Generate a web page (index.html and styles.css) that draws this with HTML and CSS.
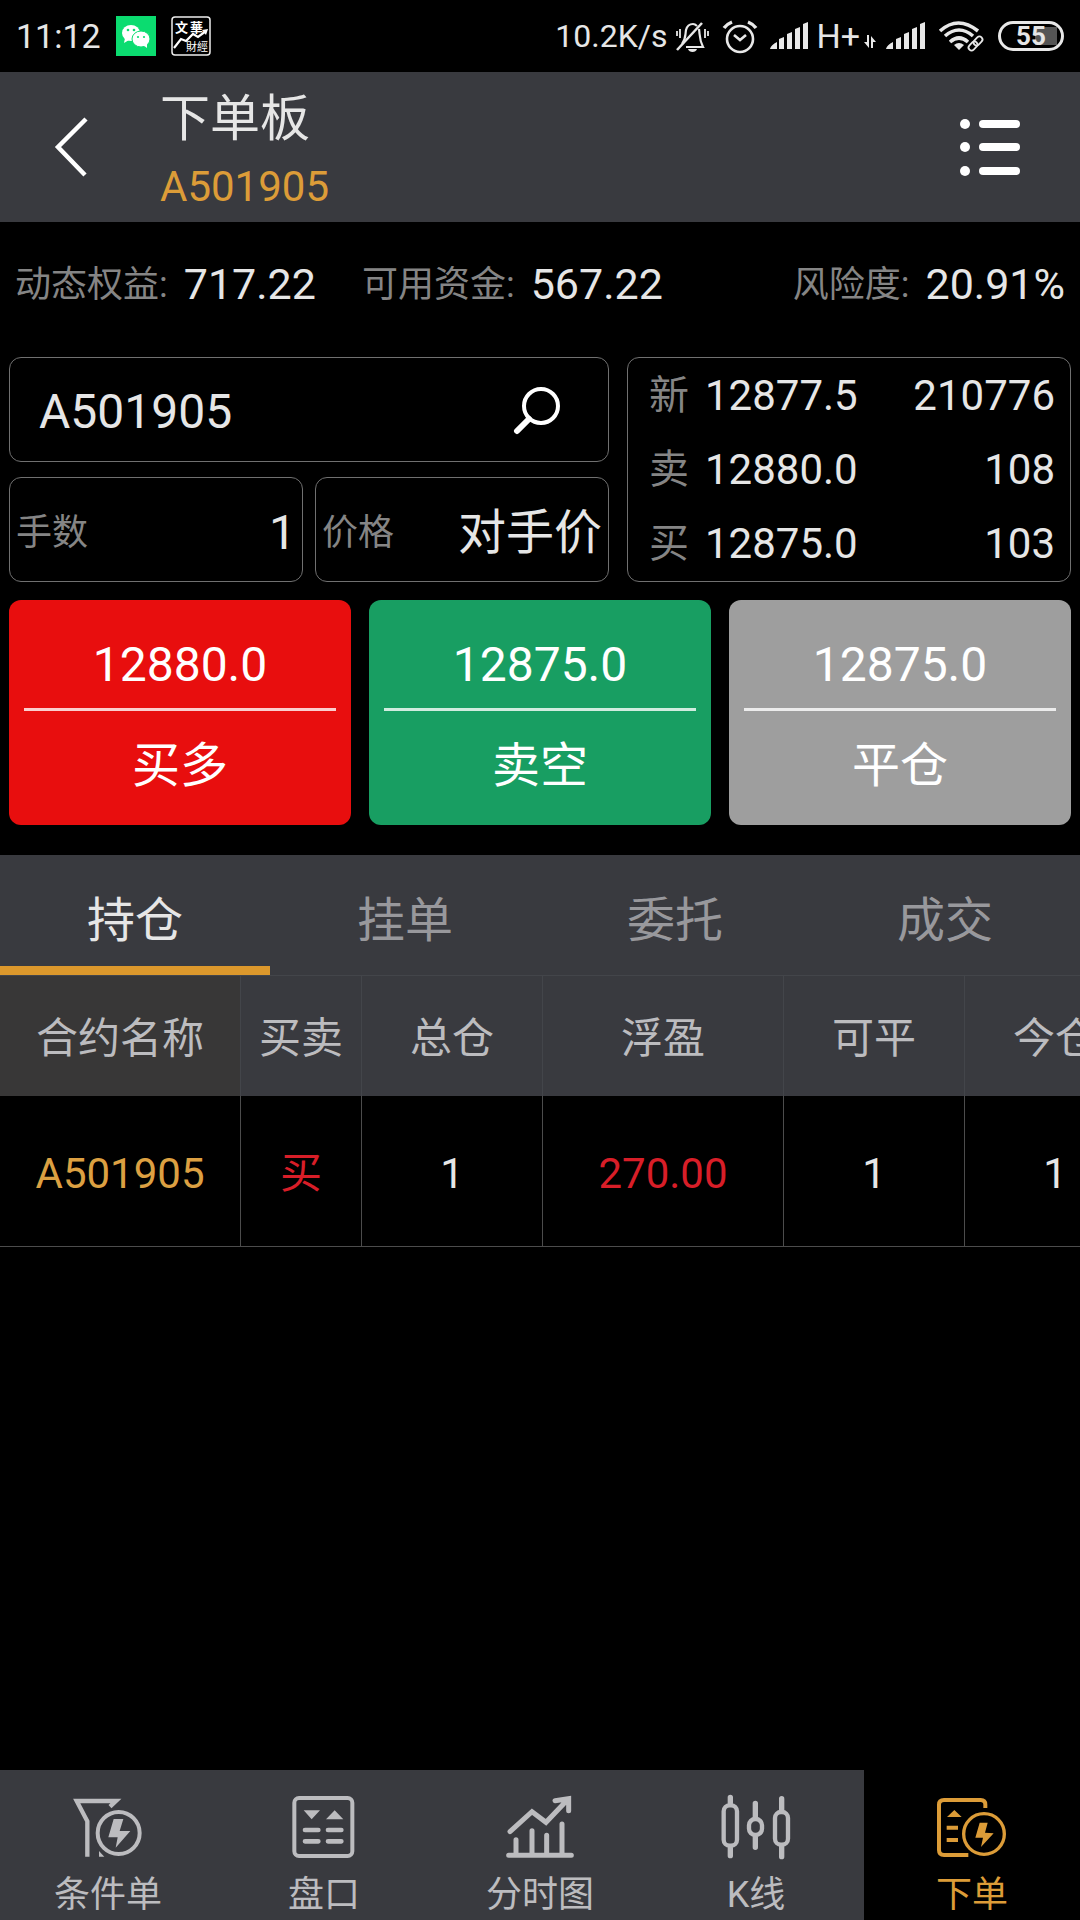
FILE: index.html
```html
<!DOCTYPE html>
<html lang="zh-CN">
<head>
<meta charset="utf-8">
<meta name="viewport" content="width=device-width, initial-scale=1">
<title>下单板</title>
<link rel="stylesheet" href="styles.css">
</head>
<body>
<div class="app">
  <div class="status">
    <div class="status-group">
      <span class="clock">11:12</span>
      <svg class="app-badge" viewBox="0 0 40 40" width="40" height="40" aria-hidden="true">
        <rect width="40" height="40" fill="#0bdc70"/>
        <ellipse cx="15" cy="17" rx="9" ry="8" fill="#fff"/>
        <path d="M9 22l-1 5 5-3z" fill="#fff"/>
        <ellipse cx="25" cy="23" rx="9" ry="8" fill="#fff" stroke="#0bdc70" stroke-width="1"/>
        <path d="M27 29l4 3v-5z" fill="#fff"/>
        <g fill="#0bdc70"><circle cx="12" cy="14" r="1.3"/><circle cx="18" cy="14" r="1.3"/><circle cx="22" cy="21" r="1.1"/><circle cx="28" cy="21" r="1.1"/></g>
      </svg>
      <svg class="app-badge" viewBox="0 0 40 40" width="40" height="40" aria-hidden="true">
        <rect x="1" y="1" width="38" height="38" rx="3" fill="none" stroke="#eee" stroke-width="1.5"/>
        <text x="4 19" y="16" font-size="13" font-weight="700" fill="#fff">文華</text>
        <text x="15" y="35" font-size="11" fill="#fff">財經</text>
        <path d="M3 32l7-9 5 2 7-7 5 3 8-6" fill="none" stroke="#fff" stroke-width="2.2"/>
        <path d="M31 14l6-1-2 6z" fill="#fff"/>
      </svg>
    </div>
    <div class="status-group status-right">
      <span class="speed">10.2K/s</span>
      <svg viewBox="0 0 36 40" width="36" height="40" fill="none" stroke="#e8e8e8" stroke-width="2.2">
        <path d="M7 28c4-5 3-8 4-14 1-4 4-6 7-6 2 0 3 1 4 2M24 13c1 6 0 10 4 18H11"/>
        <path d="M27 7L2 34" stroke-width="2.5"/>
        <path d="M2 15v5M5 13v9M30 13v9M33 15v5" stroke-width="1.8"/>
        <path d="M13 33h9c-1 4-8 4-9 0z" fill="#e8e8e8" stroke="none"/>
      </svg>
      <svg viewBox="0 0 40 40" width="40" height="40" fill="none" stroke="#e8e8e8" stroke-width="2.6">
        <circle cx="21" cy="23" r="13"/>
        <path d="M15 19l6 5 6-5"/>
        <path d="M5 12q3-4 8-6M29 6q5 2 8 6" stroke-width="3.5"/>
      </svg>
      <svg viewBox="0 0 41 40" width="41" height="40" fill="#e8e8e8">
        <path d="M3 33q1-4 7-7v7zM12 23l5-2v12h-5zM20 18l5-2v17h-5zM28 13l5-2v22h-5zM36 8l5-2v27h-5z"/>
      </svg>
      <span class="net">H+<svg viewBox="0 0 14 40" width="14" height="40" fill="#e8e8e8"><path d="M4 19h2v13L1 26h3zM8 20l5 6h-3v6H8z"/></svg></span>
      <svg viewBox="0 0 42 40" width="42" height="40" fill="#e8e8e8">
        <path d="M1 33q1-4 7-7v7zM11 23l5-2v12h-5zM19 18l5-2v17h-5zM27 13l5-2v22h-5zM35 8l5-2v27h-5z"/>
      </svg>
      <svg viewBox="0 0 55 40" width="55" height="40" fill="none" stroke="#e8e8e8" stroke-width="3.6">
        <path d="M5 15q18-16 38 0M10 20q14-12 28 0M15 26q9-8 18 0"/>
        <path d="M24 34l-5-5q5-4 10 0z" fill="#e8e8e8" stroke="none"/>
        <g stroke-width="1.8"><rect x="-3" y="-5" width="6" height="10" rx="3" transform="translate(43 25) rotate(45)"/><rect x="-3" y="-5" width="6" height="10" rx="3" transform="translate(38 30) rotate(45)"/></g>
      </svg>
      <span class="battery">55</span>
    </div>
  </div>

  <header class="header">
    <button class="icon-btn" type="button" aria-label="返回">
      <svg viewBox="0 0 48 64" width="48" height="64" fill="none" stroke="#fff" stroke-width="4.5"><path d="M38 4L10 32l27 28"/></svg>
    </button>
    <div class="heading">
      <h1>下单板</h1>
      <p>A501905</p>
    </div>
    <button class="icon-btn" type="button" aria-label="菜单">
      <svg viewBox="0 0 62 62" width="62" height="62" fill="#fff">
        <circle cx="6" cy="8" r="5"/><circle cx="6" cy="31" r="5"/><circle cx="6" cy="55" r="5"/>
        <rect x="20" y="4" width="41" height="8" rx="4"/><rect x="20" y="27" width="41" height="8" rx="4"/><rect x="20" y="51" width="41" height="8" rx="4"/>
      </svg>
    </button>
  </header>

  <main class="main">
    <dl class="funds">
      <div><dt>动态权益:</dt><dd>717.22</dd></div>
      <div><dt>可用资金:</dt><dd>567.22</dd></div>
      <div class="risk"><dt>风险度:</dt><dd>20.91%</dd></div>
    </dl>

    <section class="order">
      <form class="order-form">
        <div class="field field-wide">
          <input class="contract" type="text" value="A501905" aria-label="合约">
          <button class="icon-btn" type="button" aria-label="搜索">
            <svg viewBox="0 0 50 50" width="50" height="50" fill="none" stroke="#fff"><circle cx="28" cy="19" r="17" stroke-width="4"/><path d="M16 32L4 44" stroke-width="6" stroke-linecap="round"/></svg>
          </button>
        </div>
        <div class="field">
          <label for="lots">手数</label>
          <input id="lots" type="text" inputmode="numeric" value="1">
        </div>
        <div class="field">
          <label for="price">价格</label>
          <input id="price" type="text" value="对手价">
        </div>
      </form>
      <dl class="quotes">
        <div><dt>新</dt><dd>12877.5</dd><dd>210776</dd></div>
        <div><dt>卖</dt><dd>12880.0</dd><dd>108</dd></div>
        <div><dt>买</dt><dd>12875.0</dd><dd>103</dd></div>
      </dl>
    </section>

    <div class="actions">
      <button class="action buy" type="button"><span>12880.0</span><span>买多</span></button>
      <button class="action sell" type="button"><span>12875.0</span><span>卖空</span></button>
      <button class="action close" type="button"><span>12875.0</span><span>平仓</span></button>
    </div>

    <div class="tabs" role="tablist">
      <button class="tab active" type="button" role="tab" aria-selected="true">持仓</button>
      <button class="tab" type="button" role="tab" aria-selected="false">挂单</button>
      <button class="tab" type="button" role="tab" aria-selected="false">委托</button>
      <button class="tab" type="button" role="tab" aria-selected="false">成交</button>
    </div>

    <div class="table-wrap">
      <table class="positions">
        <colgroup><col class="c-wide"><col class="c-narrow"><col class="c-mid"><col class="c-wide"><col class="c-mid"><col class="c-mid"></colgroup>
        <thead><tr><th>合约名称</th><th>买卖</th><th>总仓</th><th>浮盈</th><th>可平</th><th>今仓</th></tr></thead>
        <tbody><tr><td class="code">A501905</td><td class="up">买</td><td>1</td><td class="up">270.00</td><td>1</td><td>1</td></tr></tbody>
      </table>
    </div>
  </main>

  <nav class="nav">
    <a href="#condition">
      <svg viewBox="0 0 216 198" width="72" height="66" fill="none" stroke="currentColor" stroke-width="13">
        <path d="M114 38L132 21H14L46 82V188"/><circle cx="140" cy="117" r="63" stroke-width="12"/>
        <path d="M81 171V188H97zM125 75H154L143 111H175L131 161L137 130H109z" fill="currentColor" stroke="none"/>
      </svg>
      条件单
    </a>
    <a href="#depth">
      <svg viewBox="0 0 216 198" width="72" height="66" fill="none" stroke="currentColor" stroke-width="12">
        <rect x="19" y="12" width="174" height="174" rx="14"/>
        <path d="M51 108H91M120 108H160M51 142H91M120 142H160" stroke-width="14" stroke-linecap="round"/>
        <path d="M47 49H96L71 76zM114 76H166L140 49z" fill="currentColor" stroke="none"/>
      </svg>
      盘口
    </a>
    <a href="#timeline">
      <svg viewBox="0 0 216 198" width="72" height="66" fill="none" stroke="currentColor" stroke-width="15" stroke-linecap="round">
        <path d="M14 184H202M36 137V184M84 110V184M128 124V184M174 90V184"/>
        <path d="M18 113L84 53L126 85L192 16M153 20L194 14V50"/>
      </svg>
      分时图
    </a>
    <a href="#kline">
      <svg viewBox="0 0 216 198" width="72" height="66" fill="none" stroke="currentColor" stroke-width="13" stroke-linecap="round">
        <rect x="11" y="34" width="40" height="121" rx="18"/><rect x="87" y="75" width="39" height="48" rx="19"/><rect x="165" y="54" width="39" height="98" rx="18"/>
        <path d="M31 10V28M31 162V185M106 28V70M106 130V160M185 14V48M185 158V188" stroke-width="16"/>
      </svg>
      K线
    </a>
    <a class="current" href="#order" aria-current="page">
      <svg viewBox="0 0 216 198" width="72" height="66" fill="none" stroke="currentColor" stroke-width="12">
        <path d="M97 183H24Q9 183 9 168V32Q9 18 24 18H134Q148 18 148 32V42"/>
        <circle cx="144" cy="120" r="61" stroke-width="10"/><path d="M32 101H66M32 138H66"/>
        <path d="M33 69H77L55 48zM131 86H155L147 116L173 118L135 159L141 131H118z" fill="currentColor" stroke="none"/>
      </svg>
      下单
    </a>
  </nav>
</div>
</body>
</html>
```
FILE: styles.css
```css
* {
  box-sizing: border-box;
}

body {
  margin: 0;
  background: #000;
  color: #e6e6e6;
  font-family: Roboto, "Noto Sans CJK SC", sans-serif;
  font-size: 42px;
  line-height: 50px;
}

h1, p, dl, dd {
  margin: 0;
  font-weight: 400;
}

button, input {
  padding: 0;
  border: 0;
  background: none;
  color: inherit;
  font: inherit;
}

svg {
  display: block;
  flex: none;
}

.app {
  display: flex;
  flex-direction: column;
  min-height: 100vh;
}

/* Status bar */
.status {
  display: flex;
  justify-content: space-between;
  align-items: center;
  height: 72px;
  padding: 0 16px;
  font-size: 34px;
}

.status-group {
  display: flex;
  align-items: center;
  gap: 15px;
}

.status-right {
  gap: 8px;
}

.speed {
  font-size: 32px;
}

.net {
  display: flex;
  align-items: center;
  gap: 3px;
}

.battery {
  width: 66px;
  height: 30px;
  border: 3px solid #e8e8e8;
  border-radius: 15px;
  background: linear-gradient(#555, #555) right 4px center / 22px 18px no-repeat;
  font-size: 26px;
  font-weight: 700;
  line-height: 25px;
  text-align: center;
}

/* Header */
.header {
  display: flex;
  align-items: center;
  height: 150px;
  padding: 0 59px 0 48px;
  background: #393a3f;
}

.icon-btn {
  display: grid;
  place-items: center;
}

.heading {
  flex: 1;
  padding: 9px 0 0 64px;
}

.heading h1 {
  font-size: 50px;
  line-height: 70px;
}

.heading p {
  color: #dc9c38;
  line-height: 66px;
}

/* Account figures */
.main {
  flex: 1;
}

.funds {
  display: flex;
  gap: 46px;
  padding: 36px 15px 47px;
}

.funds div {
  display: flex;
  align-items: center;
  gap: 16px;
}

.funds dt {
  padding-top: 2px;
}

.funds dd {
  font-size: 43px;
}

.funds .risk {
  margin-left: auto;
}

dt, label {
  color: #858585;
  font-size: 36px;
}

/* Order entry */
.order {
  display: grid;
  grid-template-columns: minmax(0, 600fr) minmax(0, 444fr);
  gap: 18px;
  padding: 0 9px;
}

.order-form {
  display: grid;
  grid-template-columns: repeat(2, minmax(0, 1fr));
  gap: 15px 12px;
}

.field, .quotes {
  border: 1px solid #707070;
  border-radius: 12px;
}

.field {
  display: flex;
  align-items: center;
  justify-content: space-between;
  height: 105px;
  padding: 6px 6px 0;
  font-size: 48px;
}

.field-wide {
  grid-column: 1 / -1;
  padding: 5px 45px 0 29px;
}

.field label {
  flex: none;
}

.field input {
  flex: 1;
  min-width: 0;
  text-align: right;
}

.field .contract {
  text-align: left;
}

.quotes {
  display: flex;
  flex-direction: column;
  padding: 1px 15px 0 21px;
}

.quotes div {
  display: grid;
  flex: 1;
  grid-template-columns: 56px auto 1fr;
  align-items: center;
}

.quotes dt {
  font-size: 40px;
}

.quotes dd:last-child {
  text-align: right;
}

/* Trade buttons */
.actions {
  display: grid;
  grid-template-columns: repeat(3, 1fr);
  gap: 18px;
  padding: 18px 9px 30px;
}

.action {
  display: flex;
  flex-direction: column;
  height: 225px;
  padding: 22px 15px 0;
  border-radius: 12px;
  color: #fff;
  font-size: 48px;
  line-height: 86px;
}

.action span {
  width: 100%;
}

.action span:first-child {
  border-bottom: 3px solid rgb(255 255 255 / 80%);
}

.action span:last-child {
  padding-top: 12px;
}

.buy {
  background: #e80e0e;
}

.sell {
  background: #189e62;
}

.close {
  background: #9e9e9e;
}

/* Tabs */
.tabs {
  display: grid;
  grid-template-columns: repeat(4, 1fr);
  background: #393a3f;
}

.tab {
  height: 120px;
  padding-top: 20px;
  border-bottom: 9px solid transparent;
  color: #98989c;
  font-size: 48px;
}

.tab.active {
  border-color: #dc982c;
  color: #e6e6e6;
}

/* Positions */
.table-wrap {
  overflow-x: auto;
  scrollbar-width: none;
}

.positions {
  width: 1146px;
  border-collapse: separate;
  border-spacing: 0;
  table-layout: fixed;
  text-align: center;
}

.c-wide {
  width: 241px;
}

.c-narrow {
  width: 121px;
}

.c-mid {
  width: 181px;
}

th, td {
  padding: 6px 0 0;
  border-right: 1px solid #4c4c4c;
  font-weight: 400;
}

th {
  height: 121px;
  border-top: 1px solid #43454a;
  border-right-color: #43454a;
  background: #393a3f;
  color: #bcbcbf;
}

th:first-child {
  background: #383737;
}

td {
  height: 151px;
  border-bottom: 1px solid #4c4c4c;
}

.code {
  color: #dca042;
}

.up {
  color: #d81e28;
}

/* Bottom navigation */
.nav {
  display: grid;
  grid-template-columns: repeat(5, 1fr);
  height: 150px;
}

.nav a {
  display: flex;
  flex-direction: column;
  align-items: center;
  gap: 10px;
  padding-top: 24px;
  background: #393a3f;
  color: #bcbcbf;
  font-size: 36px;
  line-height: 50px;
  text-decoration: none;
}

.nav .current {
  background: #000;
  color: #dc9c38;
}
```
